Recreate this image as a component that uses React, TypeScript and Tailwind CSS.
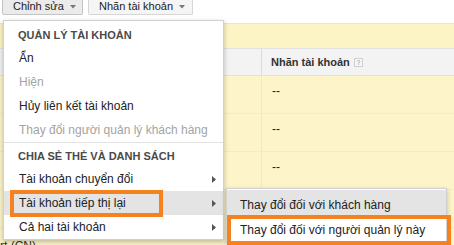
import React from 'react';

const Caret = () => (
  <svg width="6" height="4" viewBox="0 0 6 4" className="ml-[6px]">
    <polygon points="0,0 6,0 3,3.5" fill="#777" />
  </svg>
);

const Arrow = () => (
  <svg width="4" height="7" viewBox="0 0 4 7">
    <polygon points="0,0 4,3.5 0,7" fill="#555" />
  </svg>
);

type Item = { label: string; disabled?: boolean; sub?: boolean; active?: boolean };

const MenuItem = ({ label, disabled, sub, active }: Item) => (
  <div
    className={`h-6 flex items-center justify-between pl-[15px] pr-[7px] text-[12px] ${
      disabled ? 'text-[#a3a3a3]' : 'text-[#222]'
    } ${active ? 'bg-[#e4e4e4]' : ''}`}
  >
    <span>{label}</span>
    {sub && <Arrow />}
  </div>
);

const Heading = ({ children }: { children: React.ReactNode }) => (
  <div className="h-5 flex items-end pb-[3px] pl-[14px] text-[11px] font-bold text-[#4a4a4a]">{children}</div>
);

export default function App() {
  const rows = ['--', '--', '--', '', ''];

  return (
    <div className="relative w-[454px] h-[245px] overflow-hidden bg-white font-['Liberation_Sans',Arial,sans-serif]">
      {/* toolbar */}
      <div className="flex gap-[5px] pl-[2px] h-[16px]">
        <div className="w-[81px] h-[16px] -mt-[1px] flex items-center pl-[10px] text-[11px] text-[#222] bg-[#ebebeb] border border-t-0 border-[#c4c4c4] rounded-b-[2px]">
          Chỉnh sửa
          <Caret />
        </div>
        <div className="w-[105px] h-[16px] -mt-[1px] flex items-center pl-[10px] text-[11px] text-[#222] bg-[#f5f5f5] border border-t-0 border-[#d6d6d6] rounded-b-[2px]">
          Nhãn tài khoản
          <Caret />
        </div>
      </div>

      {/* account table behind the menu */}
      <div className="mt-[7px]">
        <div className="h-[25px] bg-[#fdf4c6] border-t border-[#f0e6b8]" />
        <div className="h-[28px] flex bg-[#f3f3f3] border-y border-[#e2e2e2]">
          <div className="w-[262px] border-r border-[#dcdcdc]" />
          <div className="flex items-center pl-[9px] gap-[4px] text-[11px] font-bold text-[#333]">
            Nhãn tài khoản
            <span className="w-[9px] h-[9px] flex items-center justify-center border border-[#cfcfcf] bg-[#f7f7f7] text-[7px] leading-none font-normal text-[#999]">
              ?
            </span>
          </div>
        </div>
        {rows.map((r, i) => (
          <div key={i} className="h-[38px] flex bg-[#fdf5c9] border-b border-[#f6ecbd]">
            <div className="w-[262px] border-r border-[#f3e9ba]">
              {i === 4 && <span className="block pt-[11px] text-[12px] leading-[14px] text-[#333]">rt (CN)</span>}
            </div>
            <div className="pl-[10px] pt-[8px] text-[12px] text-[#222] leading-[14px]">{r}</div>
          </div>
        ))}
      </div>

      {/* dropdown menu */}
      <div className="absolute left-[3px] top-[20px] w-[221px] bg-white border border-[rgba(0,0,0,0.18)] shadow-[0_2px_5px_rgba(0,0,0,0.25)] pt-[5px]">
        <Heading>QUẢN LÝ TÀI KHOẢN</Heading>
        <MenuItem label="Ẩn" />
        <MenuItem label="Hiện" disabled />
        <MenuItem label="Hủy liên kết tài khoản" />
        <MenuItem label="Thay đổi người quản lý khách hàng" disabled />
        <div className="h-px bg-[#e3e3e3] mb-[4px]" />
        <Heading>CHIA SẺ THẺ VÀ DANH SÁCH</Heading>
        <MenuItem label="Tài khoản chuyển đổi" sub />
        <MenuItem label="Tài khoản tiếp thị lại" sub active />
        <MenuItem label="Cả hai tài khoản" sub />
      </div>

      {/* submenu */}
      <div className="absolute left-[226px] top-[188px] w-[221px] bg-white border border-[rgba(0,0,0,0.18)] shadow-[0_2px_5px_rgba(0,0,0,0.25)] pt-[1px]">
        <div className="h-[26px] flex items-center pt-[4px] pl-[13px] text-[12px] text-[#222] bg-[#e4e4e4]">
          Thay đổi đối với khách hàng
        </div>
        <div className="h-[26px] flex items-center pt-[2px] pl-[13px] text-[12px] text-[#222]">
          Thay đổi đối với người quản lý này
        </div>
      </div>

      {/* orange annotation boxes */}
      <div className="absolute left-[10px] top-[190px] w-[153px] h-[27px] border-[4px] border-[#f5821f]" />
      <div className="absolute left-[227px] top-[215px] w-[224px] h-[30px] border-[4px] border-[#f5821f]" />
    </div>
  );
}
